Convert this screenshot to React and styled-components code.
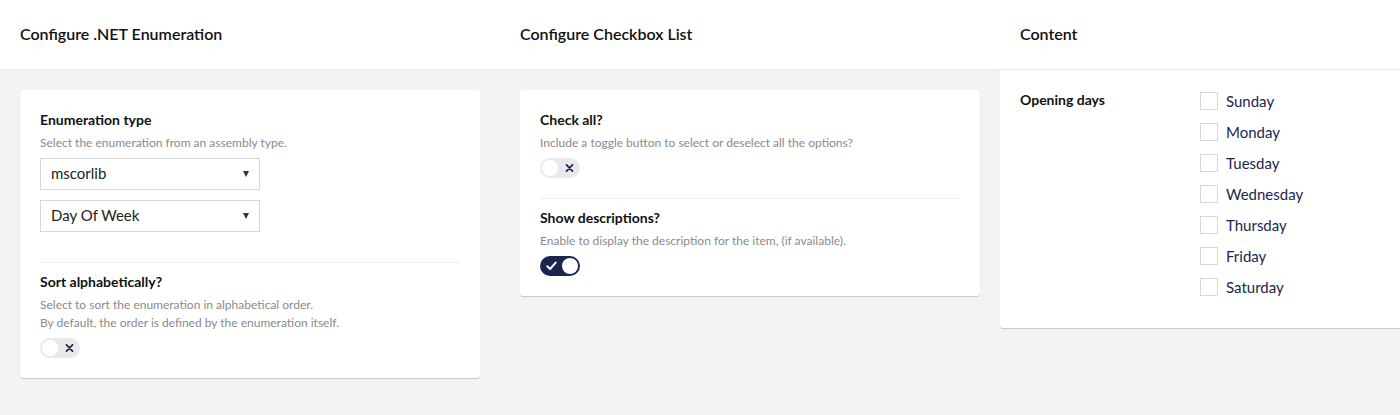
import React from "react";
import styled, { createGlobalStyle } from "styled-components";

const Global = createGlobalStyle`
  html, body { margin: 0; padding: 0; }
  body {
    font-family: Lato, "Open Sans", sans-serif;
    background: #f4f3f3;
    color: #000;
    -webkit-font-smoothing: antialiased;
  }
`;

const Page = styled.div`
  display: flex;
  width: 1400px;
  height: 415px;
  background: #f4f3f3;
`;

const Column = styled.div`
  display: flex;
  flex-direction: column;
  width: ${(p) => p.$width || "500px"};
  flex: ${(p) => (p.$grow ? "1 1 auto" : "0 0 auto")};
`;

const Header = styled.div`
  box-sizing: border-box;
  height: 70px;
  border-bottom: 1px solid #e9e9eb;
  background: #fff;
  display: flex;
  align-items: center;
  padding: 0 20px 2px;
  font-size: 16px;
  font-weight: 600;
  color: #111;
`;

const Body = styled.div`
  padding: ${(p) => (p.$flush ? "0" : "20px")};
`;

const Card = styled.div`
  background: #fff;
  border-radius: ${(p) => (p.$flush ? "0 0 0 3px" : "3px")};
  box-shadow: 0 1px 1px rgba(0, 0, 0, 0.18);
  padding: ${(p) => (p.$flush ? "20px 20px 32px" : "20px")};
`;

const Property = styled.div`
  padding-top: ${(p) => (p.$first ? "0" : "9px")};
  padding-bottom: ${(p) => (p.$last ? "0" : "20px")};
  border-bottom: ${(p) => (p.$last ? "none" : "1px solid #f0f0f2")};
`;

const Label = styled.div`
  font-size: 14px;
  font-weight: 700;
  line-height: 20px;
  color: #111;
`;

const Description = styled.div`
  margin-top: 4px;
  font-size: 12px;
  line-height: 18px;
  color: #8a8a8c;
`;

const Controls = styled.div`
  margin-top: 6px;
  display: flex;
  flex-direction: column;
  gap: 10px;
  margin-bottom: ${(p) => p.$extra || "0"};
`;

const Select = styled.div`
  box-sizing: border-box;
  width: 220px;
  height: 32px;
  border: 1px solid #d8d7d9;
  display: flex;
  align-items: center;
  justify-content: space-between;
  padding: 0 9px 2px 10px;
  font-size: 15px;
  color: #222;
  background: #fff;
`;

const Arrow = styled.span`
  width: 0;
  height: 0;
  border-left: 3.5px solid transparent;
  border-right: 3.5px solid transparent;
  border-top: 6px solid #333;
  margin: 2px 1px 0 0;
`;

const ToggleTrack = styled.div`
  box-sizing: border-box;
  position: relative;
  width: 40px;
  height: 20px;
  border-radius: 10px;
  background: ${(p) => (p.$on ? "#1b264f" : "#e9e9eb")};
`;

const Knob = styled.span`
  position: absolute;
  top: 2px;
  left: ${(p) => (p.$on ? "22px" : "2px")};
  width: 16px;
  height: 16px;
  border-radius: 50%;
  background: #fff;
`;

const ToggleIcon = styled.svg`
  position: absolute;
  top: ${(p) => (p.$on ? "5px" : "6px")};
  left: ${(p) => (p.$on ? "6px" : "25px")};
  width: ${(p) => (p.$on ? "11px" : "9px")};
  height: ${(p) => (p.$on ? "10px" : "8px")};
`;

function Toggle({ on }) {
  return (
    <ToggleTrack $on={on}>
      {on ? (
        <ToggleIcon $on viewBox="0 0 11 10">
          <path d="M1.3 5.3 L4.1 8 L9.7 1.6" fill="none" stroke="#fff" strokeWidth="2" strokeLinecap="round" strokeLinejoin="round" />
        </ToggleIcon>
      ) : (
        <ToggleIcon viewBox="0 0 9 8">
          <path d="M1.5 0.8 L7.5 7.2 M7.5 0.8 L1.5 7.2" fill="none" stroke="#1b264f" strokeWidth="1.7" strokeLinecap="round" />
        </ToggleIcon>
      )}
      <Knob $on={on} />
    </ToggleTrack>
  );
}

const ContentRow = styled.div`
  display: flex;
`;

const ContentLabel = styled(Label)`
  width: 180px;
  flex: 0 0 180px;
`;

const CheckList = styled.div`
  display: flex;
  flex-direction: column;
  gap: 13px;
  padding-top: 2px;
`;

const CheckItem = styled.label`
  display: flex;
  align-items: center;
  gap: 8px;
  height: 18px;
  font-size: 15px;
  color: #1b264f;
`;

const Box = styled.span`
  box-sizing: border-box;
  width: 18px;
  height: 18px;
  border: 1px solid #d8d7d9;
  background: #fff;
`;

const days = ["Sunday", "Monday", "Tuesday", "Wednesday", "Thursday", "Friday", "Saturday"];

export default function App() {
  return (
    <>
      <Global />
      <Page>
        <Column>
          <Header>Configure .NET Enumeration</Header>
          <Body>
            <Card>
              <Property $first>
                <Label>Enumeration type</Label>
                <Description>Select the enumeration from an assembly type.</Description>
                <Controls $extra="10px">
                  <Select>
                    mscorlib
                    <Arrow />
                  </Select>
                  <Select>
                    Day Of Week
                    <Arrow />
                  </Select>
                </Controls>
              </Property>
              <Property $last>
                <Label>Sort alphabetically?</Label>
                <Description>
                  Select to sort the enumeration in alphabetical order.
                  <br />
                  By default, the order is defined by the enumeration itself.
                </Description>
                <Controls>
                  <Toggle on={false} />
                </Controls>
              </Property>
            </Card>
          </Body>
        </Column>
        <Column>
          <Header>Configure Checkbox List</Header>
          <Body>
            <Card>
              <Property $first>
                <Label>Check all?</Label>
                <Description>Include a toggle button to select or deselect all the options?</Description>
                <Controls>
                  <Toggle on={false} />
                </Controls>
              </Property>
              <Property $last>
                <Label>Show descriptions?</Label>
                <Description>Enable to display the description for the item, (if available).</Description>
                <Controls>
                  <Toggle on />
                </Controls>
              </Property>
            </Card>
          </Body>
        </Column>
        <Column $width="400px" $grow>
          <Header>Content</Header>
          <Body $flush>
            <Card $flush>
              <ContentRow>
                <ContentLabel>Opening days</ContentLabel>
                <CheckList>
                  {days.map((d) => (
                    <CheckItem key={d}>
                      <Box />
                      {d}
                    </CheckItem>
                  ))}
                </CheckList>
              </ContentRow>
            </Card>
          </Body>
        </Column>
      </Page>
    </>
  );
}
